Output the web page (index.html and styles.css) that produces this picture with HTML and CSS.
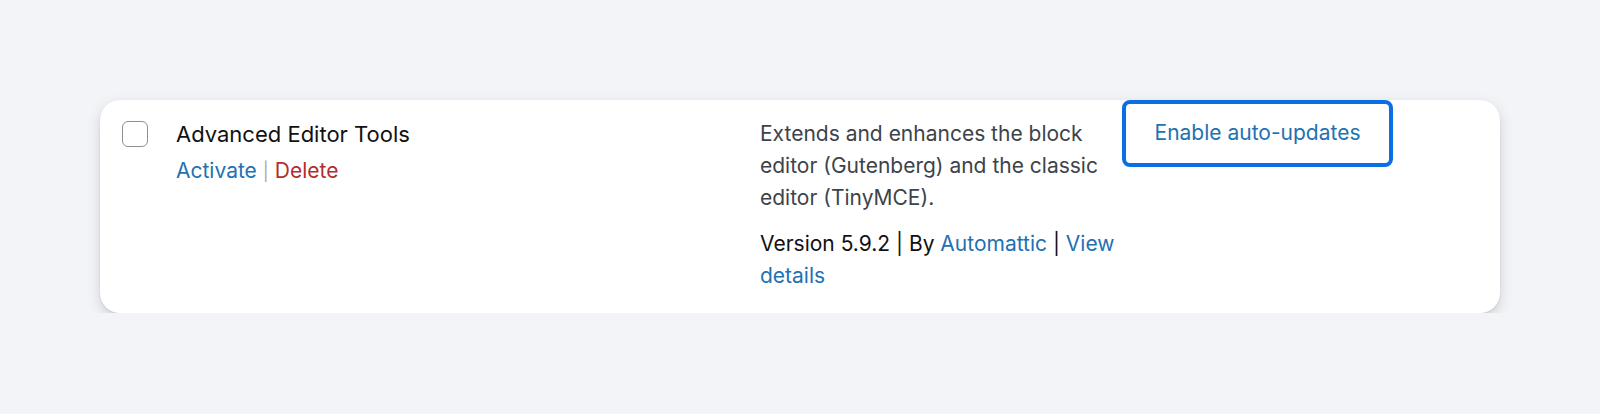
FILE: index.html
```html
<!DOCTYPE html>
<html lang="en">
<head>
<meta charset="utf-8">
<title>Plugin row</title>
<link rel="stylesheet" href="styles.css">
</head>
<body>
<div class="page">
  <div class="plugin-card">
    <div class="cell check-cell"><span class="checkbox"></span></div>
    <div class="cell title-cell">
      <div class="plugin-title">Advanced Editor Tools</div>
      <div class="row-actions"><a class="link">Activate</a><span class="sep">|</span><a class="link delete">Delete</a></div>
    </div>
    <div class="cell desc-cell">
      <p class="desc">Extends and enhances the block editor (Gutenberg) and the classic editor (TinyMCE).</p>
      <p class="meta">Version 5.9.2 | By <a class="link">Automattic</a> | <a class="link">View details</a></p>
    </div>
    <div class="btn-cell">
      <a class="auto-btn">Enable auto-updates</a>
    </div>
  </div>
</div>
</body>
</html>
```
FILE: styles.css
```css
html, body {
  margin: 0;
  padding: 0;
  background: #f3f4f8;
}
body {
  font-family: Inter, "Noto Sans", "Liberation Sans", sans-serif;
  font-size: 21px;
  line-height: 32px;
  color: #1d2327;
}
.page {
  padding: 100px 100px 0;
}
.plugin-card {
  background: #fff;
  border-radius: 20px;
  box-shadow: 0 1px 2px rgba(0,0,0,0.10), 0 5px 14px rgba(0,0,0,0.14);
  display: grid;
  grid-template-columns: 54px 584px 362px 271px;
  padding: 0 22px 23px;
  height: 213px;
  box-sizing: border-box;
}
.cell {
  padding-top: 18px;
}
.checkbox {
  display: block;
  width: 26px;
  height: 26px;
  box-sizing: border-box;
  border: 1.5px solid #8c8f94;
  border-radius: 6px;
  margin-top: 3px;
}
.plugin-title {
  color: #111;
  font-size: 22px;
  line-height: 32px;
}
.row-actions {
  margin-top: 5px;
}
.link {
  color: #2271b1;
  text-decoration: none;
}
.link.delete {
  color: #b32d2e;
}
.sep {
  color: #a7aaad;
  margin: 0 6px;
  font-size: 18px;
}
.desc {
  margin: 0;
  width: 362px;
  color: #3c434a;
}
.meta {
  margin: 14px 0 0;
  width: 362px;
  color: #111;
}
.auto-btn {
  display: block;
  box-sizing: border-box;
  width: 271px;
  height: 67px;
  border: 4px solid #0a6fe3;
  border-radius: 8px;
  padding: 13px 0 14px;
  text-align: center;
  color: #2271b1;
  text-decoration: none;
}
```
